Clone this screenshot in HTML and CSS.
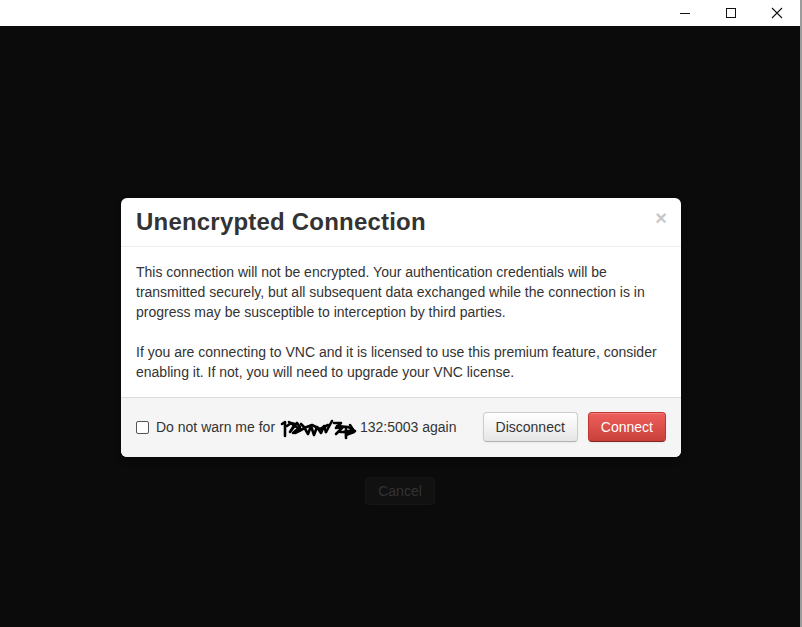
FILE: index.html
```html
<!DOCTYPE html>
<html>
<head>
<meta charset="utf-8">
<link rel="stylesheet" href="styles.css">
</head>
<body>
<div class="window">
  <div class="titlebar">
    <div class="ctrl">
      <svg width="12" height="12" viewBox="0 0 12 12"><path d="M1 6.5h10" stroke="#111" stroke-width="1"/></svg>
    </div>
    <div class="ctrl">
      <svg width="12" height="12" viewBox="0 0 12 12"><rect x="1.5" y="1.5" width="9" height="9" fill="none" stroke="#111" stroke-width="1"/></svg>
    </div>
    <div class="ctrl">
      <svg width="12" height="12" viewBox="0 0 12 12"><path d="M1 1L11 11M11 1L1 11" stroke="#111" stroke-width="1.1"/></svg>
    </div>
  </div>
  <div class="main">
    <div class="modal">
      <div class="modal-header">
        <h3 class="modal-title">Unencrypted Connection</h3>
        <span class="close">×</span>
      </div>
      <div class="modal-body">
        <p>This connection will not be encrypted. Your authentication credentials will be transmitted securely, but all subsequent data exchanged while the connection is in progress may be susceptible to interception by third parties.</p>
        <p class="last">If you are connecting to VNC and it is licensed to use this premium feature, consider enabling it. If not, you will need to upgrade your VNC license.</p>
      </div>
      <div class="modal-footer">
        <label class="warn">
          <span class="checkbox"></span>
          <span class="warn-text">Do not warn me for <svg class="scribble" width="80" height="24" viewBox="0 0 80 24"><g fill="none" stroke="#000" stroke-width="2.6" stroke-linecap="round" stroke-linejoin="round"><path d="M2 8l3-2v14"/><path d="M7 10l4-3 4 1-5 8 7-9 3 4-7 6 10-4"/><path d="M9 6l12 8-6 3"/><path d="M21 8l3 3 4 7 3-8 3 9 3-8 4 6 3-7 2 6"/><path d="M24 12l8-3 8 4 8-4"/><path d="M46 16l6-11"/><path d="M54 7h7l-5 5 7-1-7 7"/><path d="M57 10l11 1 5 3-9 2 11-1"/><path d="M60 16h14l-8 3"/><path d="M66 12v10"/><path d="M70 9l4 6"/></g></svg>132:5003 again</span>
        </label>
        <div class="actions">
          <button class="btn">Disconnect</button>
          <button class="btn btn-danger">Connect</button>
        </div>
      </div>
    </div>
    <button class="cancel">Cancel</button>
  </div>
</div>
</body>
</html>
```
FILE: styles.css
```css
* { box-sizing: border-box; }
html, body {
  margin: 0;
  padding: 0;
  width: 802px;
  height: 627px;
  overflow: hidden;
  background: #0b0b0b;
}
.window {
  width: 802px;
  height: 627px;
  display: flex;
  flex-direction: column;
  border-right: 2px solid #9c9c9c;
  font-family: "Liberation Sans", Arial, sans-serif;
}
.titlebar {
  height: 26px;
  background: #fff;
  display: flex;
  justify-content: flex-end;
  flex: none;
}
.ctrl {
  width: 46px;
  height: 26px;
  display: flex;
  align-items: center;
  justify-content: center;
  padding-bottom: 1px;
}
.main {
  flex: 1;
  background: #0b0b0b;
  display: flex;
  flex-direction: column;
  align-items: center;
  padding-top: 172px;
  padding-left: 2px;
}
.modal {
  width: 560px;
  background: #fff;
  border-radius: 6px;
  box-shadow: 0 3px 7px rgba(0,0,0,0.3);
  color: #333;
  font-size: 14px;
  line-height: 20px;
}
.modal-header {
  height: 49px;
  padding: 9px 15px;
  border-bottom: 1px solid #eee;
  display: flex;
  justify-content: space-between;
  align-items: flex-start;
}
.modal-title {
  margin: 0;
  font-size: 24px;
  line-height: 30px;
  font-weight: bold;
  color: #333;
  letter-spacing: 0.2px;
}
.close {
  font-size: 20px;
  font-weight: bold;
  line-height: 20px;
  color: #c8c8c8;
  margin-top: 1px;
  margin-right: -1px;
}
.modal-body {
  padding: 15px;
}
.modal-body p {
  margin: 0 0 20px;
}
.modal-body p.last { margin: 0; }
.modal-footer {
  height: 60px;
  background: #f5f5f5;
  border-top: 1px solid #ddd;
  border-radius: 0 0 6px 6px;
  padding: 14px 15px 15px 15px;
  display: flex;
  justify-content: space-between;
  align-items: center;
}
.warn {
  display: flex;
  align-items: center;
  gap: 7px;
}
.checkbox {
  width: 13px;
  height: 13px;
  border: 1px solid #555;
  border-radius: 2px;
  background: #fff;
}
.warn-text {
  display: flex;
  align-items: center;
  white-space: pre;
}
.scribble {
  margin-left: 1px;
  margin-top: 2px;
}
.actions {
  display: flex;
  gap: 10px;
}
.btn {
  font-family: "Liberation Sans", Arial, sans-serif;
  font-size: 14px;
  line-height: 20px;
  padding: 4px 12px;
  height: 30px;
  border: 1px solid #ccc;
  border-bottom-color: #b3b3b3;
  border-radius: 4px;
  color: #333;
  background: linear-gradient(#ffffff, #e6e6e6);
  box-shadow: inset 0 1px 0 rgba(255,255,255,0.2), 0 1px 2px rgba(0,0,0,0.05);
}
.btn-danger {
  color: #fff;
  background: linear-gradient(#ee5f5b, #c9403a);
  border-color: #bd362f #bd362f #802420;
}
.cancel {
  margin-top: 20px;
  margin-right: 2px;
  width: 70px;
  height: 28px;
  font-family: "Liberation Sans", Arial, sans-serif;
  font-size: 14px;
  color: #333;
  background: #111;
  border: 1px solid #161616;
  border-radius: 4px;
  padding: 0;
}
```
